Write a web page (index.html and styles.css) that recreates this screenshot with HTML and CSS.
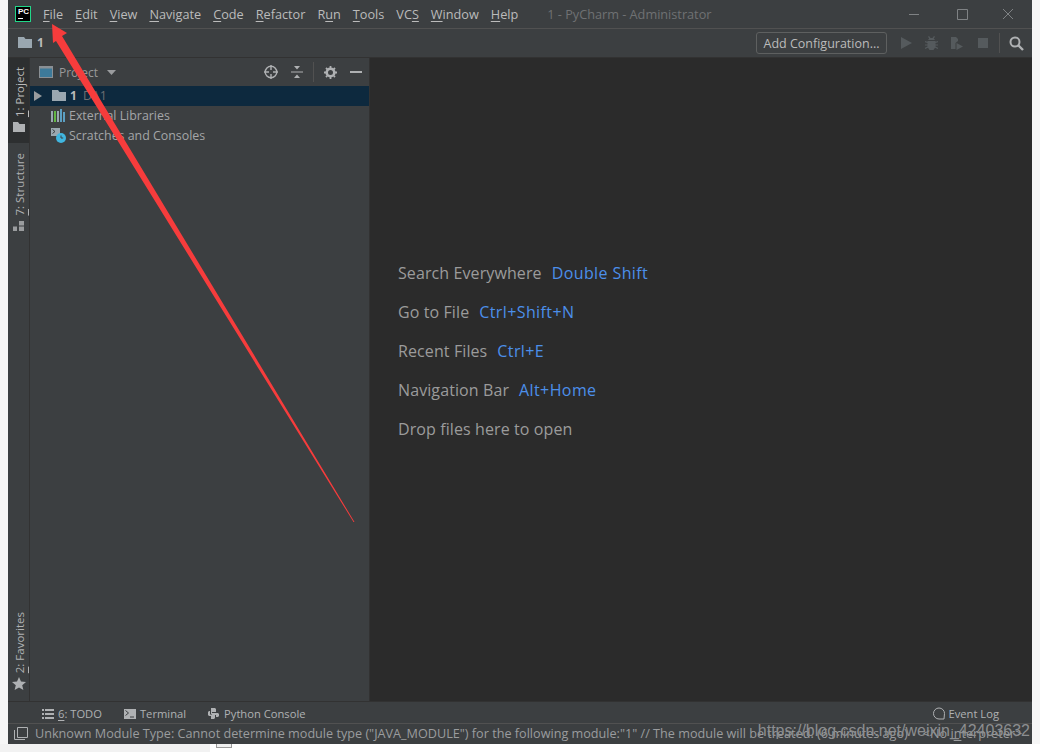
FILE: index.html
```html
<!DOCTYPE html>
<html lang="en">
<head>
    <meta charset="UTF-8">
    <title>1 - PyCharm - Administrator</title>
    <link rel="stylesheet" href="styles.css">
</head>
<body>
<div class="ide">
    <header class="titlebar">
        <div class="logo"><span class="logo-text">PC</span><span class="logo-bar"></span></div>
        <nav class="menu">
            <span><u>F</u>ile</span>
            <span><u>E</u>dit</span>
            <span><u>V</u>iew</span>
            <span><u>N</u>avigate</span>
            <span><u>C</u>ode</span>
            <span><u>R</u>efactor</span>
            <span>R<u>u</u>n</span>
            <span><u>T</u>ools</span>
            <span>VC<u>S</u></span>
            <span><u>W</u>indow</span>
            <span><u>H</u>elp</span>
        </nav>
        <div class="title">1 - PyCharm - Administrator</div>
        <div class="win-controls">
            <svg width="46" height="28" viewBox="0 0 46 28"><path d="M16 14.500h10" stroke="#7f8284" fill="none"/></svg>
            <svg width="46" height="28" viewBox="0 0 46 28"><path d="M18.500 9.500h10v10h-10z" stroke="#7f8284" fill="none"/></svg>
            <svg width="46" height="28" viewBox="0 0 46 28"><path d="M18 9l10 10M28 9L18 19" stroke="#7f8284" fill="none"/></svg>
        </div>
    </header>

    <div class="navbar">
        <div class="crumb">
            <svg class="folder" width="14" height="11" viewBox="0 0 14 11"><path d="M0 0h6l1.500 2H14v9H0z" fill="#9aa7b0"/></svg>
            <b>1</b>
        </div>
        <div class="run-tools">
            <button class="config">Add Configuration...</button>
            <svg class="play" width="11" height="12" viewBox="0 0 11 12"><path d="M0 0l11 6-11 6z" fill="#555a5d"/></svg>
            <svg width="13" height="14" viewBox="0 0 13 14"><path d="M4 0l1.500 2h2L9 0l1 .7L8.800 2.500 10 4H3l1.200-1.500L3 .7zM2.500 5h8v.8l2.500-.8v1.200l-2.500.8v1.500H13v1.100h-2.500v1l2.500 1.200V13l-3-1.300L8.500 14h-4L3 11.700 0 13v-1.200l2.500-1.200v-1H0V8.500h2.500V7L0 6.200V5l2.500.8z" fill="#555a5d"/></svg>
            <svg width="13" height="14" viewBox="0 0 13 14"><path d="M1 1h5l2 2v2L5.500 7v6H1z" fill="#555a5d"/><path d="M6.500 7l6.500 3.500L6.500 14z" fill="#555a5d"/></svg>
            <svg class="stop" width="10" height="10" viewBox="0 0 10 10"><path d="M0 0h10v10H0z" fill="#555a5d"/></svg>
            <span class="sep"></span>
            <svg width="15" height="15" viewBox="0 0 15 15"><circle cx="6" cy="6" r="4.500" fill="none" stroke="#afb1b3" stroke-width="2"/><path d="M9.500 9.500L14 14" stroke="#afb1b3" stroke-width="2.400"/></svg>
        </div>
    </div>

    <div class="workspace">
        <aside class="stripe">
            <div class="stripe-top">
                <div class="stripe-btn active">
                    <span class="vtext"><u>1</u>: Project</span>
                    <svg width="12" height="10" viewBox="0 0 12 10"><path d="M0 0h5l1.500 2H12v8H0z" fill="#afb1b3"/></svg>
                </div>
                <div class="stripe-btn">
                    <span class="vtext"><u>7</u>: Structure</span>
                    <svg width="11" height="10" viewBox="0 0 11 10"><path d="M6 0h5v4.500H6zM0 5.500h4V10H0zM6 5.500h5V10H6z" fill="#9a9c9e"/></svg>
                </div>
            </div>
            <div class="stripe-btn favorites">
                <span class="vtext"><u>2</u>: Favorites</span>
                <svg width="14" height="13" viewBox="0 0 14 13"><path d="M7 0l2 4.600 5 .4-3.800 3.200L11.400 13 7 10.400 2.600 13l1.200-4.800L0 5l5-.4z" fill="#afb1b3"/></svg>
            </div>
        </aside>

        <section class="project">
            <div class="project-head">
                <svg class="win-icon" width="14" height="12" viewBox="0 0 14 12"><rect x=".5" y=".5" width="13" height="11" fill="#3d7a9a" stroke="#8a9095"/><path d="M1 1h12v1.500H1z" fill="#8a9095"/></svg>
                <span class="project-label">Project</span>
                <svg class="caret" width="9" height="5" viewBox="0 0 9 5"><path d="M0 0h9L4.500 5z" fill="#9a9c9e"/></svg>
                <div class="head-tools">
                    <svg class="wide" width="14" height="14" viewBox="0 0 14 14"><circle cx="7" cy="7" r="5.800" fill="none" stroke="#afb1b3" stroke-width="1.400"/><path d="M7 0v5M7 9v5M0 7h5M9 7h5" stroke="#afb1b3" stroke-width="1.400"/></svg>
                    <svg width="12" height="14" viewBox="0 0 12 14"><path d="M0 6.500h12v1H0z" fill="#afb1b3"/><path d="M3 1h6L6 4.500zM3 13h6L6 9.500z" fill="#afb1b3"/></svg>
                    <span class="sep"></span>
                    <svg class="wide" width="13" height="13" viewBox="0 0 13 13"><circle cx="6.500" cy="6.500" r="3.800" fill="none" stroke="#afb1b3" stroke-width="2.600"/><path d="M6.500 0v13M0 6.500h13M2 2l9 9M11 2l-9 9" stroke="#afb1b3" stroke-width="1.800" stroke-dasharray="2 9"/></svg>
                    <svg width="12" height="2" viewBox="0 0 12 2"><path d="M0 0h12v2H0z" fill="#afb1b3"/></svg>
                </div>
            </div>
            <ul class="tree">
                <li class="selected">
                    <svg class="arrow" width="8" height="10" viewBox="0 0 8 10"><path d="M0 0l8 5-8 5z" fill="#9a9c9e"/></svg>
                    <svg class="folder" width="14" height="11" viewBox="0 0 14 11"><path d="M0 0h6l1.500 2H14v9H0z" fill="#9aa7b0"/></svg>
                    <b>1</b><span class="path">D:\1</span>
                </li>
                <li>
                    <svg class="lib" width="15" height="13" viewBox="0 0 15 13"><path d="M0 2h2v11H0zM6 2h2v11H6z" fill="#9aa7b0"/><path d="M3 2h2v11H3z" fill="#62b543"/><path d="M9 0h2v13H9zM12 3h2v10h-2z" fill="#5c9fc2"/></svg>
                    External Libraries
                </li>
                <li>
                    <svg class="lib" width="15" height="15" viewBox="0 0 15 15"><path d="M0 0h9v8H0z" fill="#9aa7b0"/><path d="M1.500 1.500L4 3.500 1.500 5.500" stroke="#3c3f41" fill="none"/><circle cx="10" cy="10" r="5" fill="#40b6e0"/><path d="M10 7.500V10h2.200" stroke="#3c3f41" fill="none"/></svg>
                    Scratches and Consoles
                </li>
            </ul>
        </section>

        <main class="editor">
            <p>Search Everywhere<em>Double Shift</em></p>
            <p>Go to File<em>Ctrl+Shift+N</em></p>
            <p>Recent Files<em>Ctrl+E</em></p>
            <p>Navigation Bar<em>Alt+Home</em></p>
            <p>Drop files here to open</p>
        </main>
    </div>

    <div class="toolbar">
        <div class="tool todo">
            <svg width="12" height="10" viewBox="0 0 12 10"><path d="M0 0h2v2H0zM3 0h9v2H3zM0 4h2v2H0zM3 4h9v2H3zM0 8h2v2H0zM3 8h9v2H3z" fill="#afb1b3"/></svg>
            <span><u>6</u>: TODO</span>
        </div>
        <div class="tool">
            <svg width="12" height="10" viewBox="0 0 12 10"><path d="M0 0h12v10H0z" fill="#afb1b3"/><path d="M1.500 1.500L4.500 4 1.500 6.500M6 8h4" stroke="#3c3f41" fill="none"/></svg>
            <span>Terminal</span>
        </div>
        <div class="tool python">
            <svg width="11" height="11" viewBox="0 0 11 11"><path d="M3 0h4l1 1v3H4v1h6l1 1v2l-1 1H8V7H4L3 6V1zM1 3h1v3l1 1h4v3l-1 1H3V8H1L0 7V4z" fill="#afb1b3"/></svg>
            <span>Python Console</span>
        </div>
        <div class="tool event-log">
            <svg width="14" height="14" viewBox="0 0 14 14"><path d="M12 12H7a5.500 5.500 0 1 1 5.500-5.500z" fill="none" stroke="#afb1b3"/></svg>
            <span>Event Log</span>
        </div>
    </div>

    <footer class="status">
        <svg width="14" height="13" viewBox="0 0 14 13"><path d="M3.500.5h10v10h-10zM.5 3v9.500H11" fill="none" stroke="#afb1b3"/></svg>
        <span class="status-msg">Unknown Module Type: Cannot determine module type ("JAVA_MODULE") for the following module:"1" // The module will be treated. (6 minutes ago)</span>
        <span class="interpreter">&lt;No i<u>n</u>terpreter&gt;</span>
        <span class="watermark">https://blog.csdn.net/weixin_42403632</span>
    </footer>

    <svg class="annot" width="400" height="530" viewBox="8 0 400 530">
        <path d="M52 24L67 33 62 36 354.500 522 353.500 522 56 41 53 43z" fill="#f63c3c"/>
    </svg>
</div>
<div class="below">
    <div class="below-left"></div>
    <div class="stub"></div>
</div>
</body>
</html>
```

FILE: styles.css
```css
body {
    margin: 0;
    background: #f6f6f6;
    font-family: 'Open Sans', sans-serif;
    overflow: hidden;
}

u { text-decoration: underline; text-underline-offset: 2px; }

.ide {
    position: relative;
    margin-left: 8px;
    width: 1024px;
    height: 744px;
    display: flex;
    flex-direction: column;
    background: #3c3f41;
    color: #afb1b3;
    font-size: 12px;
}

/* title bar */
.titlebar {
    height: 28px;
    display: flex;
    align-items: center;
    border-bottom: 1px solid #515151;
    flex-shrink: 0;
}

.logo {
    width: 14px;
    height: 14px;
    margin-left: 7px;
    background: #000;
    border: 1px solid #21d789;
    position: relative;
    overflow: hidden;
}

.logo-text {
    position: absolute;
    left: 2px;
    top: 0;
    font: bold 8px/10px 'Liberation Sans', sans-serif;
    color: #fff;
}

.logo-bar {
    position: absolute;
    left: 2px;
    bottom: 2px;
    width: 5px;
    height: 1px;
    background: #fff;
}

.menu {
    display: flex;
    gap: 12px;
    margin-left: 12px;
    color: #bbbbbb;
    font-size: 12.700px;
}

.title {
    margin-left: 29px;
    color: #6f7173;
    font-size: 12.700px;
}

.win-controls {
    margin-left: auto;
    display: flex;
    margin-right: 1px;
}

.win-controls svg { display: block; }

/* navigation bar */
.navbar {
    height: 28px;
    display: flex;
    align-items: center;
    justify-content: space-between;
    border-bottom: 1px solid #323232;
    flex-shrink: 0;
}

.crumb {
    display: flex;
    align-items: center;
    gap: 5px;
    margin-left: 10px;
    padding-bottom: 2px;
    color: #bbbbbb;
}

.run-tools {
    display: flex;
    align-items: center;
    gap: 12px;
    margin-right: 8px;
}

.config {
    height: 22px;
    width: 131px;
    padding: 0;
    margin-right: 2px;
    background: #3c3f41;
    border: 1px solid #5e6060;
    border-radius: 3px;
    color: #bbbbbb;
    font: 12.500px 'Open Sans', sans-serif;
}

.play { margin-right: 1px; }
.stop { margin: 0 -1px 0 3px; }
.run-tools .sep { margin-right: -3px; }

.sep {
    width: 1px;
    height: 20px;
    background: #515151;
}

/* main area */
.workspace {
    flex: 1;
    min-height: 0;
    display: flex;
}

.stripe {
    width: 21px;
    flex-shrink: 0;
    display: flex;
    flex-direction: column;
    justify-content: space-between;
    border-right: 1px solid #323232;
}

.stripe-btn {
    display: flex;
    flex-direction: column;
    align-items: center;
    gap: 5px;
    padding: 10px 0 6px;
}

.stripe-btn.active { background: #2d2f30; color: #bbbbbb; padding: 9px 0 11px; }
.stripe-btn.favorites { gap: 4px; padding-bottom: 11px; }

.vtext {
    writing-mode: vertical-rl;
    transform: rotate(180deg);
    font-size: 11.500px;
    line-height: 21px;
    margin-left: 2px;
}

.project {
    width: 339px;
    flex-shrink: 0;
    border-right: 1px solid #323232;
}

.project-head {
    height: 28px;
    display: flex;
    align-items: center;
    padding-left: 9px;
}

.project-label { margin-left: 6px; color: #999; }
.caret { margin-left: 9px; }

.head-tools {
    margin-left: auto;
    margin-right: 7px;
    display: flex;
    align-items: center;
    gap: 10px;
}

.head-tools .wide { margin-right: 3px; }

.tree {
    list-style: none;
    margin: 0;
    padding: 0;
    color: #a4a6a8;
    font-size: 12.400px;
}

.tree li {
    height: 20px;
    box-sizing: border-box;
    padding-bottom: 2px;
    display: flex;
    align-items: center;
    padding-left: 21px;
    position: relative;
}

.tree li .lib { margin-right: 3px; }
.tree li.selected { background: #0d293e; padding-left: 22px; }
.tree .arrow { position: absolute; left: 4px; top: 5px; }
.tree .folder { margin-right: 4px; }
.tree b { color: #bbbbbb; font-size: 12px; }
.tree .path { margin-left: 6px; color: #6d7072; }

.editor {
    flex: 1;
    background: #2b2b2b;
    padding-top: 204px;
    font-size: 16px;
    color: #9b9b9b;
}

.editor p {
    margin: 0 0 0 28px;
    height: 39px;
    line-height: 22px;
    letter-spacing: .1px;
}

.editor em {
    font-style: normal;
    color: #4c8fea;
    margin-left: 10px;
    letter-spacing: .4px;
}

/* bottom bars */
.toolbar {
    height: 19px;
    display: flex;
    align-items: center;
    gap: 22px;
    padding: 2px 0 0 34px;
    border-top: 1px solid #323232;
    flex-shrink: 0;
    font-size: 11.200px;
}

.tool {
    display: flex;
    align-items: center;
    gap: 4px;
}

.tool.python { gap: 5px; }

.event-log { margin-left: auto; margin-right: 33px; gap: 3px; }

.status {
    position: relative;
    height: 18px;
    display: flex;
    align-items: center;
    gap: 7px;
    padding: 0 0 2px 6px;
    border-top: 1px solid #515151;
    flex-shrink: 0;
    overflow: hidden;
    white-space: nowrap;
    font-size: 12.650px;
}

.status-msg { color: #9a9c9e; }
.interpreter { margin-left: 8px; color: #9a9c9e; }

.watermark {
    position: absolute;
    right: 2px;
    top: -2px;
    color: #8c8e90;
    font: 16px 'Liberation Sans', sans-serif;
}

.annot {
    position: absolute;
    left: 0;
    top: 0;
    pointer-events: none;
}

/* bit of the page showing under the window */
.below {
    height: 8px;
    display: flex;
    background: #fff;
}

.below-left {
    width: 210px;
    background: #f2f2f2;
}

.stub {
    width: 14px;
    height: 3px;
    margin-left: 6px;
    background: #f0f0f0;
    border: 1px solid #9a9a9a;
    border-top: none;
}
```
